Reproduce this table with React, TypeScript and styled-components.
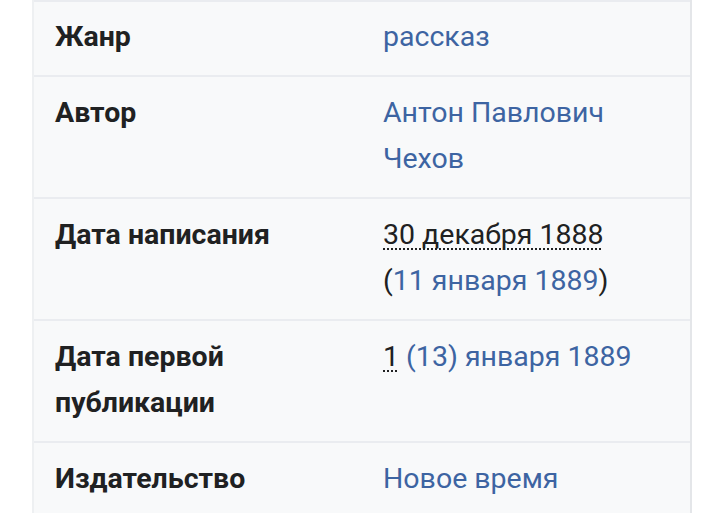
import styled, { createGlobalStyle } from "styled-components";

const Global = createGlobalStyle`
  body {
    margin: 0;
    background: #ffffff;
    font-family: Roboto, "Noto Sans", sans-serif;
  }
`;

const Table = styled.div`
  width: 656px;
  margin-left: 32px;
  background: #f8f9fa;
  border-left: 2px solid #eef0f2;
  border-right: 2px solid #e4e6e9;
`;

const Row = styled.div`
  display: grid;
  grid-template-columns: 328px 1fr;
  padding: 13px 21px 15px;
  border-top: 2px solid #eaecf0;
  font-size: 28.5px;
  line-height: 46px;

  &:first-child {
    padding-top: 12px;
  }
`;

const Label = styled.div`
  font-weight: 700;
  color: #202122;
`;

const Value = styled.div`
  color: #202122;
`;

const Link = styled.span`
  color: #3d64a2;
`;

const Abbr = styled.span`
  text-decoration: underline dotted #202122;
  text-decoration-thickness: 2px;
  text-underline-offset: 4px;
`;

const rows: { label: React.ReactNode; value: React.ReactNode }[] = [
  { label: "Жанр", value: <Link>рассказ</Link> },
  {
    label: "Автор",
    value: (
      <Link>
        Антон Павлович
        <br />
        Чехов
      </Link>
    ),
  },
  {
    label: "Дата написания",
    value: (
      <>
        <Abbr>30 декабря 1888</Abbr>
        <br />(<Link>11 января 1889</Link>)
      </>
    ),
  },
  {
    label: (
      <>
        Дата первой
        <br />
        публикации
      </>
    ),
    value: (
      <>
        <Abbr>1</Abbr> <Link>(13) января 1889</Link>
      </>
    ),
  },
  { label: "Издательство", value: <Link>Новое время</Link> },
];

export default function App() {
  return (
    <>
      <Global />
      <Table>
        {rows.map((r, i) => (
          <Row key={i}>
            <Label>{r.label}</Label>
            <Value>{r.value}</Value>
          </Row>
        ))}
      </Table>
    </>
  );
}
